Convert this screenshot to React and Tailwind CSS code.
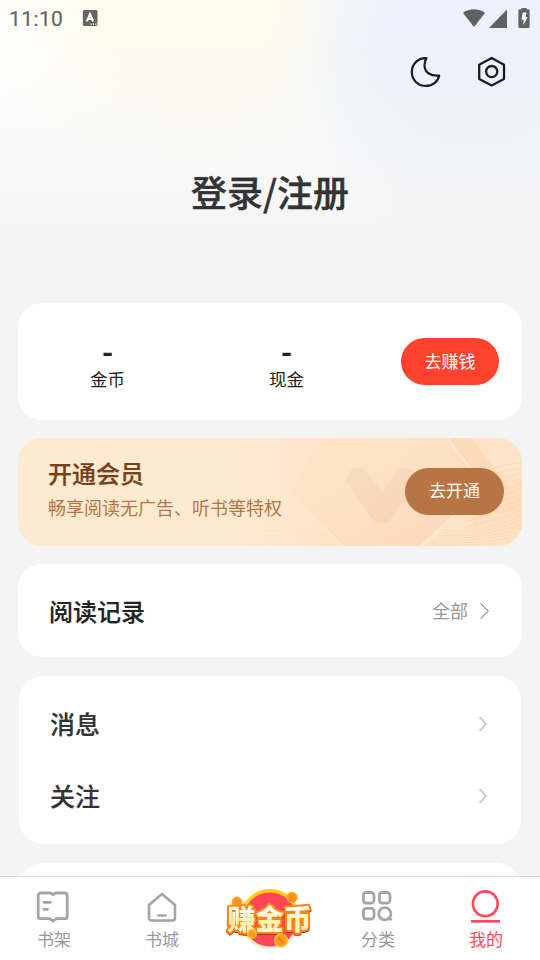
const MoonIcon = () => (
  <svg width="32" height="32" viewBox="0 0 32 32" fill="none" stroke="#1c1c1c" strokeWidth="2.200" strokeLinejoin="round">
    <path d="M16.500 2.200C9 1.200 1.800 7.700 1.800 16.100C1.800 24 8 29.900 15.700 29.900C22.500 29.900 28 25.700 29.200 19.500C21 20.500 14.700 16.600 14.500 9.500C14.450 6.800 15.200 4.200 16.500 2.200Z" />
  </svg>
);

const SettingsIcon = () => (
  <svg width="32" height="32" viewBox="0 0 32 32" fill="none" stroke="#1c1c1c" strokeWidth="2.300" strokeLinejoin="round">
    <path d="M15.700 2L28 8.700V22.900L15.700 29.400L3.200 22.900V8.700Z" />
    <circle cx="15.700" cy="15.600" r="5.600" />
  </svg>
);

const Chevron = ({ size = 18, color = '#999' }) => (
  <svg width={size / 2 + 2} height={size} viewBox="0 0 11 18" fill="none" stroke={color} strokeWidth="1.200">
    <path d="M1.500 1.200L9.200 9L1.500 16.800" />
  </svg>
);

const StatusBar = () => (
  <div className="flex h-9 items-center justify-between pl-[9px] pr-[9px] font-['Roboto',sans-serif] text-[#666664]">
    <div className="flex items-center gap-[19px]">
      <span className="w-[54px] whitespace-nowrap pt-[2px] text-[21px] leading-none tracking-[0.400px] [-webkit-text-stroke:0.200px]">11:10</span>
      <svg width="16" height="18" viewBox="0 0 16 18">
        <rect x="0.800" y="1" width="14.700" height="16" rx="1.500" fill="#666661" />
        <path d="M4.800 12.300L8 5L11.200 12.300M5.800 10H10.200" fill="none" stroke="#fff" strokeWidth="2" />
        <path d="M8.500 15.100h1.300M10.900 15.100h1.300M13.300 15.100h1.200" stroke="#fff" strokeWidth="1.200" />
      </svg>
    </div>
    <svg width="69" height="22" viewBox="0 0 69 22" fill="#606163">
      <path d="M1 6C7 1 17 1 23 6L12 20Z" />
      <path d="M45 2.500V21H27Z" />
      <path d="M59.500 2.300V1h5v1.300h1.800a1.300 1.300 0 0 1 1.300 1.300V19.700a1.300 1.300 0 0 1-1.300 1.300h-8.600a1.300 1.300 0 0 1-1.300-1.300V3.600a1.300 1.300 0 0 1 1.300-1.300Z" />
      <path d="M60.800 5.500h3.800l-1 4.500h1.900L61.500 18v-5.500h-2Z" fill="#fff" />
    </svg>
  </div>
);

const Balance = ({ label }) => (
  <div className="flex w-[179px] flex-col items-center text-[#222]">
    <span className="text-[30px] font-bold leading-[22px]">-</span>
    <span className="mt-[8px] text-[17.500px] leading-[20px]">{label}</span>
  </div>
);

// translucent facets, check mark and wave lines behind the member card
const MemberPattern = () => (
  <svg className="absolute inset-0" width="504" height="108" viewBox="0 0 504 108" fill="none">
    <defs>
      <linearGradient id="facet" x1="0" y1="0" x2="1" y2="1">
        <stop offset="0" stopColor="#ffe7ca" />
        <stop offset="0.500" stopColor="#fee0c3" />
        <stop offset="1" stopColor="#fbd6b8" />
      </linearGradient>
      <linearGradient id="check" gradientUnits="userSpaceOnUse" x1="340" y1="30" x2="365" y2="86">
        <stop offset="0" stopColor="#f8dcc0" />
        <stop offset="1" stopColor="#f9d5b5" />
      </linearGradient>
      <linearGradient id="side" x1="0" y1="0" x2="1" y2="0">
        <stop offset="0" stopColor="#fee4c8" stopOpacity="0" />
        <stop offset="0.350" stopColor="#fee3c6" />
        <stop offset="1" stopColor="#fee4c8" />
      </linearGradient>
      <linearGradient id="band" x1="0" y1="0" x2="0" y2="1">
        <stop offset="0" stopColor="#fddcba" stopOpacity="0" />
        <stop offset="0.400" stopColor="#fddcba" />
        <stop offset="1" stopColor="#fddfbf" stopOpacity="0.200" />
      </linearGradient>
    </defs>
    <rect x="230" width="274" height="108" fill="url(#side)" />
    <path d="M300 0H430L470 52L403 108H325L272 55Z" fill="url(#facet)" />
    <path d="M430 0H454L504 68V78L470 52Z" fill="#fddab8" />
    <rect x="455" y="30" width="49" height="78" fill="url(#band)" />
    <path d="M429 0L462 43" stroke="#ffecd2" strokeWidth="1.800" />
    <path d="M403 108L438 76" stroke="#ffe9ce" strokeWidth="2.500" />
    <path d="M272 55L325 108" stroke="#ffe8cc" strokeWidth="1.500" />
    <path d="M300 0L272 45" stroke="#ffead0" strokeWidth="1" />
    <path d="M340.500 41L363.500 74L387 41" stroke="url(#check)" strokeWidth="23" strokeLinecap="round" strokeLinejoin="round" />
    <g stroke="#f5cfa0" strokeWidth="0.600" opacity="0.600">
      {[0, 1, 2, 3, 4, 5, 6, 7, 8, 9].map((i) => (
        <path key={i} d={`M${470 - i * 3} ${36 + i * 6}C480 ${25 + i * 6} 490 ${28 + i * 6} 504 ${24 + i * 5}`} />
      ))}
      {[0, 1, 2, 3, 4, 5, 6].map((i) => (
        <path key={i} d={`M${426 - i * 3} ${92 + i * 2.5}C450 ${96 + i * 2} 480 ${88 + i * 3} 504 ${78 + i * 4}`} />
      ))}
    </g>
    <g stroke="#fbdcb4" strokeWidth="0.500" opacity="0.600">
      {[0, 1, 2, 3, 4, 5].map((i) => (
        <path key={i} d={`M${245 - i * 3} ${88 + i * 4}C265 ${76 + i * 5} 280 ${98 + i * 3} ${310 + i * 2} ${94 + i * 3}`} />
      ))}
    </g>
  </svg>
);

const ShelfIcon = () => (
  <svg width="36" height="34" viewBox="0 0 36 34" fill="none" stroke="#a5a5a5" strokeWidth="2.800" strokeLinecap="round" strokeLinejoin="round">
    <path d="M17 4.500L14.500 3H4.700Q2.200 3 2.200 5.500V26.200Q2.200 28.700 4.700 28.700H13.500L17 31L20.500 28.700H28.600Q31.200 28.700 31.200 26.200V5.500Q31.200 3 28.600 3H19.500Z" />
    <path d="M7.900 12.300H14.500M7.900 19.300H11.500" />
  </svg>
);

const StoreIcon = () => (
  <svg width="34" height="34" viewBox="0 0 34 34" fill="none" stroke="#a5a5a5" strokeWidth="2.600" strokeLinecap="round" strokeLinejoin="round">
    <path d="M17 4L30 15V28Q30 30.500 27.500 30.500H6.500Q4 30.500 4 28V15Z" />
    <path d="M13.500 25.500H20.500" />
  </svg>
);

const CategoryIcon = () => (
  <svg width="36" height="34" viewBox="0 0 36 34" fill="none" stroke="#a5a5a5" strokeWidth="2.800">
    <rect x="3.400" y="2.500" width="10.600" height="10.600" rx="2.800" />
    <rect x="19.400" y="2.500" width="10.600" height="10.600" rx="2.800" />
    <rect x="3.400" y="18.400" width="10.600" height="10.600" rx="2.800" />
    <circle cx="24.800" cy="23.800" r="6.100" />
    <path d="M28.500 27.300L31.500 30.300" />
  </svg>
);

const ProfileIcon = () => (
  <svg width="34" height="34" viewBox="0 0 34 34" fill="none" stroke="#ff4a5d" strokeWidth="2.700">
    <circle cx="16.300" cy="13.700" r="12.400" />
    <path d="M2 31.300H31" />
  </svg>
);

const CoinBadge = () => (
  <svg width="90" height="64" viewBox="0 0 90 64">
    <defs>
      <linearGradient id="ring" x1="0" y1="0" x2="0" y2="1">
        <stop offset="0" stopColor="#ffc900" />
        <stop offset="1" stopColor="#fff0d5" />
      </linearGradient>
      <linearGradient id="gold" x1="0" y1="0" x2="0" y2="1">
        <stop offset="0.300" stopColor="#fffef6" />
        <stop offset="0.600" stopColor="#fff0ad" />
        <stop offset="1" stopColor="#fffde8" />
      </linearGradient>
    </defs>
    <circle cx="45" cy="32" r="30" fill="url(#ring)" />
    <circle cx="45" cy="32.500" r="27" fill="#ff4558" />
    <g fill="#ff9318" stroke="#ffab30" strokeWidth="1.500">
      <circle cx="12" cy="15" r="4.700" />
      <circle cx="67" cy="10.500" r="5" />
    </g>
    <text
      x="44.500"
      y="42.500"
      className="drop-shadow-[0_1.5px_0_#a82e12] [paint-order:stroke]"
      fontFamily="'Noto Sans CJK SC', sans-serif"
      fontSize="28"
      fontWeight="900"
      textAnchor="middle"
      fill="url(#gold)"
      stroke="#ff8518"
      strokeWidth="4"
      strokeLinejoin="round"
    >
      赚金币
    </text>
    <g fill="#ff9a1c" stroke="#ffbd35" strokeWidth="1.800">
      <circle cx="27" cy="47" r="4.200" />
      <circle cx="56" cy="53.500" r="6.300" />
    </g>
    <path d="M53.500 51L58.500 56" stroke="#f47914" strokeWidth="2" />
  </svg>
);

const tabs = [
  { label: '书架', Icon: ShelfIcon },
  { label: '书城', Icon: StoreIcon },
  { label: '赚金币', Icon: CoinBadge, badge: true },
  { label: '分类', Icon: CategoryIcon },
  { label: '我的', Icon: ProfileIcon, active: true },
];

const TabBar = () => (
  <nav className="grid h-[84px] shrink-0 grid-cols-5 border-t border-[#dcdcdc] bg-white">
    {tabs.map(({ label, Icon, badge, active }) => (
      <div key={label} className={badge ? 'flex flex-col items-center pt-[10px]' : 'flex flex-col items-center pt-[13px]'}>
        <Icon />
        {!badge && (
          <span className={active ? 'mt-[3px] text-[17px] leading-6 text-[#ff4a5d]' : 'mt-[3px] text-[17px] leading-6 text-[#999]'}>
            {label}
          </span>
        )}
      </div>
    ))}
  </nav>
);

const App = () => {
  return (
    <div className="flex h-[960px] w-[540px] flex-col overflow-hidden bg-[#f4f4f4] font-['Noto_Sans_CJK_SC',sans-serif]">
      <main className="flex min-h-0 flex-1 flex-col overflow-hidden">
        <header className="h-[303px] shrink-0 bg-[linear-gradient(to_bottom,transparent_30px,#f4f4f4_260px),radial-gradient(ellipse_210px_190px_at_475px_55px,#edf1fb_45%,transparent),radial-gradient(ellipse_230px_160px_at_200px_10px,#fffced_45%,transparent),linear-gradient(#fff,#fff)]">
          <StatusBar />
          <div className="flex justify-end gap-[34px] pr-[32px] pt-5">
            <MoonIcon />
            <SettingsIcon />
          </div>
          <h1 className="mt-[77px] text-center text-[36px] font-medium leading-[52px] text-[#333] [-webkit-text-stroke:0.400px]">登录/注册</h1>
        </header>

        <section className="mx-[18px] flex h-[117px] shrink-0 items-center rounded-[24px] bg-white pr-[23px]">
          <div className="flex flex-1 pt-1">
            <Balance label="金币" />
            <Balance label="现金" />
          </div>
          <button className="h-[47px] w-[98px] rounded-full bg-[#ff422d] pb-[2px] text-[17px] text-white">去赚钱</button>
        </section>

        <section className="relative mx-[18px] mt-[18px] h-[108px] shrink-0 overflow-hidden rounded-[24px] bg-[#feead0]">
          <MemberPattern />
          <div className="relative flex h-full items-center justify-between pb-[2px] pl-[30px] pr-[18px]">
            <div className="pb-[5px]">
              <h2 className="text-[24px] font-medium leading-[36px] text-[#77401a] [-webkit-text-stroke:0.200px]">开通会员</h2>
              <p className="text-[18px] leading-8 text-[#b27648]">畅享阅读无广告、听书等特权</p>
            </div>
            <button className="h-[47px] w-[99px] rounded-full bg-[#b87543] pb-[2px] text-[17px] text-white">去开通</button>
          </div>
        </section>

        <section className="mx-[18px] mt-[18px] flex h-[93px] shrink-0 items-center justify-between rounded-[24px] bg-white pl-[31px] pr-[32px]">
          <h2 className="text-[24px] font-medium text-[#222] [-webkit-text-stroke:0.200px]">阅读记录</h2>
          <div className="flex items-center gap-[11px] text-[18px] text-[#999]">
            全部
            <Chevron />
          </div>
        </section>

        <section className="mx-[19px] mt-[19px] flex h-[168px] shrink-0 flex-col rounded-[24px] bg-white py-3 pl-[31px] pr-[33px]">
          {['消息', '关注'].map((item) => (
            <div key={item} className="flex h-[72px] items-center justify-between text-[25px] font-medium text-[#333] [-webkit-text-stroke:0.200px]">
              {item}
              <Chevron size={16} color="#aaa" />
            </div>
          ))}
        </section>

        <section className="mx-[19px] mt-[19px] h-[80px] shrink-0 rounded-[24px] bg-white" />
      </main>
      <TabBar />
    </div>
  );
};

export default App;
